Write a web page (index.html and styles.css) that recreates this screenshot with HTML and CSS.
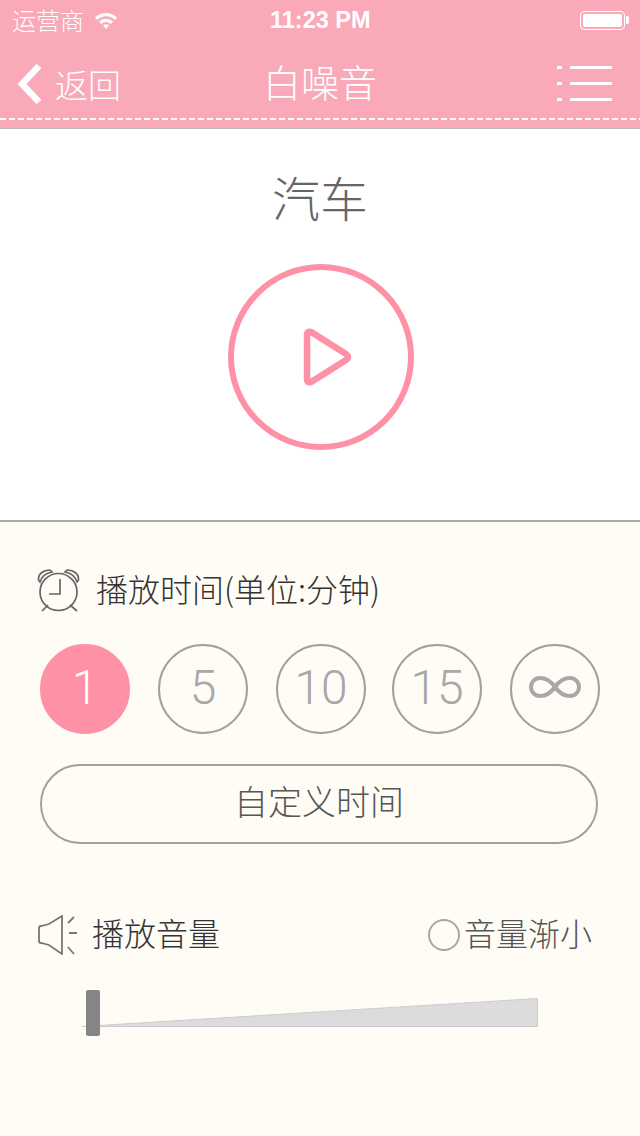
FILE: index.html
```html
<!DOCTYPE html>
<html lang="zh-CN">
<head>
  <meta charset="UTF-8" />
  <meta name="viewport" content="width=device-width, initial-scale=1.0" />
  <title>白噪音</title>
  <link rel="stylesheet" href="styles.css">
</head>

<body>

  <header class="top">
    <div class="status-bar">
      <div class="carrier">
        <span>运营商</span>
        <svg class="wifi" width="24" height="20" viewBox="0 0 24 20">
          <path d="M1 7.5 A15.5 15.5 0 0 1 23 7.5 L20.8 9.9 A12.4 12.4 0 0 0 3.2 9.9 Z" fill="#fff"/>
          <path d="M5 11.6 A10 10 0 0 1 19 11.6 L16.8 14 A7 7 0 0 0 7.2 14 Z" fill="#fff"/>
          <path d="M9 15.6 A4.4 4.4 0 0 1 15 15.6 L12 19 Z" fill="#fff"/>
        </svg>
      </div>
      <div class="clock">11:23 PM</div>
      <div class="battery"><span class="battery-fill"></span><span class="battery-tip"></span></div>
    </div>

    <nav class="nav-bar">
      <div class="back">
        <svg width="26" height="42" viewBox="0 0 26 42">
          <path d="M23 3 L6 21 L23 39" fill="none" stroke="#fff" stroke-width="6.5"/>
        </svg>
        <span>返回</span>
      </div>
      <div class="nav-title">白噪音</div>
      <svg class="menu" width="56" height="36" viewBox="0 0 56 36">
        <g fill="#fff">
          <rect x="1" y="0" width="5" height="3"/><rect x="14" y="0" width="42" height="3"/>
          <rect x="1" y="16" width="5" height="3"/><rect x="14" y="16" width="42" height="3"/>
          <rect x="1" y="32" width="5" height="3"/><rect x="14" y="32" width="42" height="3"/>
        </g>
      </svg>
    </nav>
    <div class="dashes"></div>
  </header>

  <section class="player">
    <h1 class="sound-name">汽车</h1>
    <button class="play-btn">
      <svg width="48" height="60" viewBox="0 0 48 60">
        <path d="M4 8 Q4 3 9 5.500 L43 27 Q47 30 43 33 L9 54.500 Q4 57 4 52 Z" fill="none" stroke="#ff91a6" stroke-width="6.5" stroke-linejoin="round"/>
      </svg>
    </button>
  </section>

  <section class="settings">
    <div class="row-title">
      <svg class="alarm" width="44" height="44" viewBox="0 0 44 44">
        <g fill="none" stroke="#666" stroke-width="1.7">
          <circle cx="21.500" cy="23" r="18.500"/>
          <path d="M23 10 V25 H12"/>
          <path d="M1.500 11 C1 5 6 1 13 1 L15 3 C9 4 5 7 3 13 Z"/>
          <path d="M41.500 11 C42 5 37 1 30 1 L28 3 C34 4 38 7 40 13 Z"/>
          <path d="M11 36 L5 42 M33 36 L40 42"/>
        </g>
      </svg>
      <span class="title-text">播放时间(单位:分钟)</span>
    </div>

    <div class="times">
      <div class="time active">1</div>
      <div class="time">5</div>
      <div class="time">10</div>
      <div class="time">15</div>
      <div class="time">
        <svg width="52" height="24" viewBox="0 0 52 24">
          <path d="M26 12 C21 5 16 3 11 3 C6 3 2 7 2 12 C2 17 6 21 11 21 C16 21 21 19 26 12 C31 5 36 3 41 3 C46 3 50 7 50 12 C50 17 46 21 41 21 C36 21 31 19 26 12 Z" fill="none" stroke="#a8a8a8" stroke-width="4"/>
        </svg>
      </div>
    </div>

    <button class="custom-btn">自定义时间</button>

    <div class="volume-head">
      <div class="row-title volume-title">
        <svg class="speaker" width="40" height="40" viewBox="0 0 40 40">
          <g fill="none" stroke="#777" stroke-width="1.8">
            <path d="M25 1 V39 L12 30 L4 28 Q2 28 2 26 V13 Q2 11 4 11 L12 9 Z"/>
            <path d="M31 8 L37 2 M32 18 H40 M31 32 L37 39"/>
          </g>
        </svg>
        <span class="title-text">播放音量</span>
      </div>
      <div class="fade-option">
        <span class="radio"></span>
        <span class="fade-text">音量渐小</span>
      </div>
    </div>

    <div class="slider">
      <svg width="456" height="30" viewBox="0 0 456 30">
        <path d="M0 28.500 L455.500 0.500 V28.500 Z" fill="#dcdcdc" stroke="#ccc" stroke-width="1"/>
      </svg>
      <span class="thumb"></span>
    </div>
  </section>

</body>
</html>
```

FILE: styles.css
```css
* {
  box-sizing: border-box;
}

body {
  margin: 0;
  width: 640px;
  height: 1136px;
  overflow: hidden;
  background: #fffcf5;
  font-family: "Noto Sans CJK SC", "Liberation Sans", sans-serif;
}

.top {
  height: 129px;
  background: #f9a9b8;
  border-bottom: 1px solid #bbb;
  color: #fff;
}

.status-bar {
  height: 40px;
  padding: 0 15px 0 12px;
  display: flex;
  align-items: center;
  justify-content: space-between;
  position: relative;
}

.carrier {
  display: flex;
  align-items: center;
  gap: 10px;
  font-size: 24px;
  font-weight: 300;
}

.carrier span {
  margin-bottom: 2px;
}

.clock {
  position: absolute;
  left: 270px;
  top: 5px;
  font-family: "Liberation Sans", sans-serif;
  font-size: 23.5px;
  font-weight: bold;
  line-height: 30px;
}

.battery {
  width: 45px;
  height: 19px;
  margin-left: auto;
  border: 1px solid #fff;
  border-radius: 4px;
  padding: 2px;
  position: relative;
}

.battery-fill {
  display: block;
  height: 100%;
  background: #fff;
  border-radius: 2px;
}

.battery-tip {
  position: absolute;
  right: -5px;
  top: 4px;
  width: 3px;
  height: 8px;
  background: #fff;
  border-radius: 0 2px 2px 0;
}

.nav-bar {
  height: 78px;
  padding: 10px 28px 0 16px;
  display: flex;
  align-items: center;
  justify-content: space-between;
  position: relative;
}

.back {
  display: flex;
  align-items: center;
  gap: 13px;
  font-size: 33px;
  font-weight: 300;
}

.nav-title {
  position: absolute;
  left: 0;
  right: 0;
  top: 16px;
  text-align: center;
  font-size: 38px;
  font-weight: 300;
  line-height: 50px;
}

.dashes {
  height: 2px;
  background: repeating-linear-gradient(90deg, #fff 0 6px, transparent 6px 9px);
}

.player {
  height: 393px;
  background: #fff;
  border-bottom: 2px solid #aaa;
  padding-top: 33px;
  display: flex;
  flex-direction: column;
  align-items: center;
}

.sound-name {
  margin: 0;
  font-size: 48px;
  font-weight: 300;
  line-height: 68px;
  color: #666;
}

.play-btn {
  width: 186px;
  height: 186px;
  margin: 34px 0 0 2px;
  padding: 0 0 0 12px;
  border: 6px solid #ff91a6;
  border-radius: 50%;
  background: #fff;
  display: flex;
  align-items: center;
  justify-content: center;
}

.settings {
  padding: 47px 40px 0;
}

.row-title {
  display: flex;
  align-items: center;
  gap: 15px;
  margin-left: -3px;
  height: 44px;
  font-size: 32px;
  font-weight: 300;
  color: #333;
}

.title-text {
  margin-bottom: 6px;
}

.times {
  margin-top: 31px;
  display: flex;
  gap: 28px;
}

.time {
  width: 90px;
  height: 90px;
  padding-bottom: 4px;
  border: 2px solid #a0a0a0;
  border-radius: 50%;
  display: flex;
  align-items: center;
  justify-content: center;
  font-family: Roboto, sans-serif;
  font-size: 48px;
  font-weight: 300;
  color: #a8a8a8;
}

.time:nth-child(4) {
  margin-left: -2px;
}

.time.active {
  background: #ff91a6;
  border-color: #ff91a6;
  color: #fff;
}

.custom-btn {
  display: block;
  width: 558px;
  height: 80px;
  margin-top: 30px;
  padding: 0 0 8px;
  border: 2px solid #a0a0a0;
  border-radius: 40px;
  background: transparent;
  font-family: inherit;
  font-size: 34px;
  font-weight: 300;
  color: #555;
}

.volume-head {
  margin-top: 65px;
  display: flex;
  align-items: center;
  justify-content: space-between;
  padding-right: 8px;
}

.fade-option {
  display: flex;
  align-items: center;
  gap: 4px;
  font-size: 32px;
  font-weight: 300;
  color: #555;
}

.fade-text {
  margin-bottom: 6px;
}

.radio {
  width: 32px;
  height: 32px;
  border: 2px solid #a8a8a8;
  border-radius: 50%;
}

.slider {
  margin: 37px 0 0 42px;
  width: 456px;
  height: 30px;
  position: relative;
}

.slider svg {
  display: block;
}

.thumb {
  position: absolute;
  left: 4px;
  top: -8px;
  width: 14px;
  height: 46px;
  background: #858585;
  border-radius: 2px;
}
```
